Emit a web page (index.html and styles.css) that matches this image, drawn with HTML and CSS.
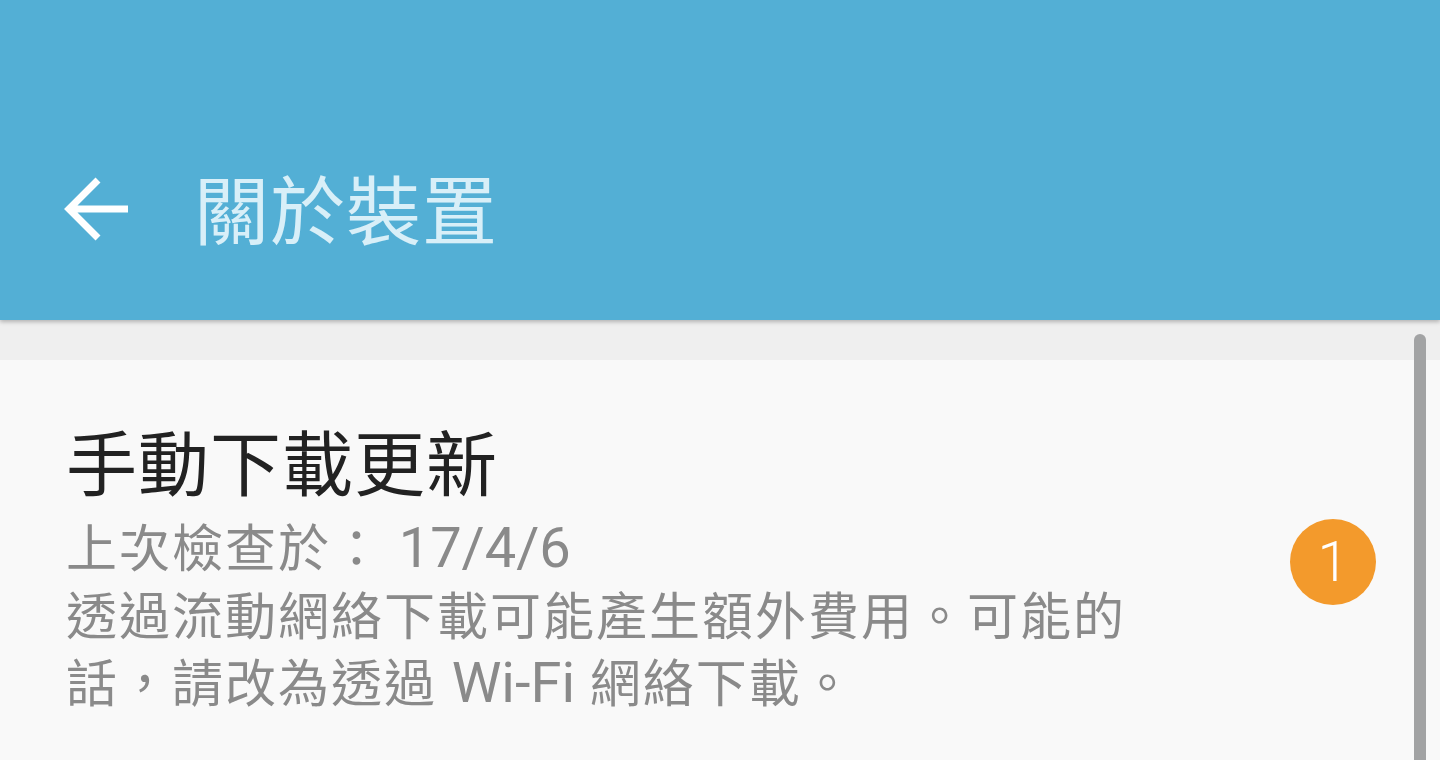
FILE: index.html
```html
<!doctype html>
<html lang="zh-Hant">
<head>
    <meta charset="UTF-8">
    <meta name="viewport" content="width=device-width, initial-scale=1.0">
    <title>關於裝置</title>
    <link rel="stylesheet" href="styles.css">
</head>
<body>
    <div class="appbar">
        <button class="back" aria-label="返回">
            <svg width="66" height="66" viewBox="0 0 66 66">
                <path d="M64 33H5M34 4L5 33l29 29" fill="none" stroke="#fff" stroke-width="7"/>
            </svg>
        </button>
        <h1 class="title">關於裝置</h1>
    </div>
    <div class="gap"></div>
    <div class="content">
        <div class="item">
            <div class="item-text">
                <div class="item-title">手動下載更新</div>
                <div class="item-sub">上次檢查於： <span class="latin">17/4/6</span></div>
                <div class="item-sub">透過流動網絡下載可能產生額外費用。可能的話，請改為透過 <span class="latin">Wi-Fi</span> 網絡下載。</div>
            </div>
            <div class="badge">1</div>
        </div>
        <div class="scrollbar"></div>
    </div>
</body>
</html>
```

FILE: styles.css
```css
body {
    margin: 0;
    width: 1440px;
    height: 760px;
    overflow: hidden;
    background: #f9f9f9;
    font-family: Roboto, "Noto Sans CJK TC", sans-serif;
}
.appbar {
    position: relative;
    z-index: 2;
    height: 320px;
    background: #53afd5;
    display: flex;
    align-items: flex-end;
    box-shadow: 0 2px 4px rgba(0, 0, 0, 0.25);
}
.back {
    background: none;
    border: 0;
    padding: 0;
    margin: 0 0 78px 64px;
    width: 70px;
    height: 66px;
    display: flex;
    align-items: center;
}
.title {
    margin: 0 0 52px 60px;
    font-weight: 400;
    font-size: 75px;
    letter-spacing: 1px;
    line-height: 110px;
    color: #d8eff8;
}
.gap {
    height: 40px;
    background: #efefef;
}
.content {
    position: relative;
    height: 400px;
}
.item {
    display: flex;
    align-items: center;
    padding: 58px 0 0 66px;
}
.item-text {
    width: 1130px;
}
.item-title {
    font-size: 71px;
    letter-spacing: 1px;
    line-height: 96px;
    color: #222;
}
.item-sub {
    font-size: 51px;
    letter-spacing: 2px;
    line-height: 67px;
    color: #8a8a8a;
}
.item-sub:nth-child(2) {
    margin-top: 2px;
}
.item-sub:nth-child(3) {
    margin-top: 1px;
}
.latin {
    font-size: 56px;
    letter-spacing: 0;
    line-height: 1;
}
.badge {
    margin-left: 94px;
    margin-top: -12px;
    width: 86px;
    height: 86px;
    border-radius: 50%;
    background: #f39a2c;
    color: #fff;
    font-size: 56px;
    font-weight: 300;
    display: flex;
    align-items: center;
    justify-content: center;
}
.scrollbar {
    position: absolute;
    top: -26px;
    left: 1414px;
    width: 12px;
    height: 460px;
    border-radius: 6px 6px 0 0;
    background: #a2a3a4;
}
```
